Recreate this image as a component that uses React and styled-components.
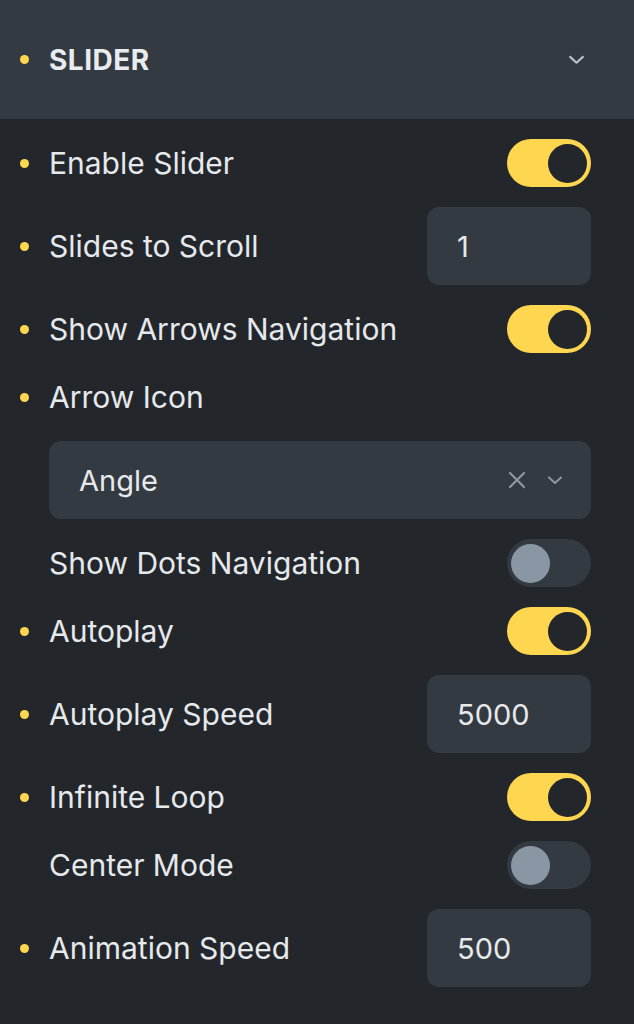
import React from "react";
import styled, { createGlobalStyle } from "styled-components";

const Global = createGlobalStyle`
  html, body { margin: 0; padding: 0; background: #23272c; }
  body { font-family: Inter, "Noto Sans", sans-serif; -webkit-font-smoothing: antialiased; }
`;

const Panel = styled.div`
  width: 634px;
  min-height: 1024px;
  background: #23272c;
  color: #e6e9ec;
`;

const Header = styled.div`
  height: 119px;
  background: #343a42;
  display: flex;
  align-items: center;
  padding: 0 49px 0 20px;
  box-sizing: border-box;
`;

const Title = styled.div`
  flex: 1;
  font-size: 28px;
  font-weight: 700;
  letter-spacing: 0.5px;
  color: #e9ecef;
`;

const Body = styled.div`
  display: flex;
  flex-direction: column;
  gap: 20px;
  padding: 20px 43px 20px 20px;
`;

const Row = styled.div`
  display: flex;
  align-items: center;
  min-height: 48px;
  padding-left: ${(p) => (p.$indent ? "29px" : "0")};
`;

const Dot = styled.span`
  width: 9px;
  height: 9px;
  border-radius: 50%;
  background: ${(p) => (p.$on ? "#ffd64f" : "transparent")};
  margin-right: 20px;
  flex-shrink: 0;
`;

const Label = styled.div`
  flex: 1;
  font-size: 30px;
  color: #e6e9ec;
`;

const Toggle = styled.div`
  width: 84px;
  height: 48px;
  border-radius: 24px;
  box-sizing: border-box;
  padding: 4px;
  display: flex;
  justify-content: ${(p) => (p.$on ? "flex-end" : "flex-start")};
  align-items: center;
  background: ${(p) => (p.$on ? "#ffd64f" : "#343a42")};
`;

const Knob = styled.div`
  width: 39px;
  height: 39px;
  border-radius: 50%;
  background: ${(p) => (p.$on ? "#23272c" : "#8a96a3")};
`;

const NumberBox = styled.div`
  width: 164px;
  height: 78px;
  border-radius: 12px;
  background: #343a42;
  box-sizing: border-box;
  padding-left: 30px;
  display: flex;
  align-items: center;
  font-size: 29px;
  color: #e6e9ec;
`;

const Select = styled.div`
  flex: 1;
  height: 78px;
  border-radius: 12px;
  background: #343a42;
  box-sizing: border-box;
  padding: 0 28px 0 30px;
  display: flex;
  align-items: center;
  gap: 21px;
  font-size: 29px;
  color: #e6e9ec;
`;

const SelectValue = styled.span`
  flex: 1;
`;

const Icon = styled.svg`
  display: block;
  flex-shrink: 0;
`;

const Chevron = ({ size = 16, color = "#aab2bb" }) => (
  <Icon width={size} height={size} viewBox="0 0 16 16">
    <path d="M2 5.5 L8 11 L14 5.5" fill="none" stroke={color} strokeWidth="2" strokeLinecap="round" strokeLinejoin="round" />
  </Icon>
);

const Cross = () => (
  <Icon width="18" height="18" viewBox="0 0 18 18">
    <path d="M2 2 L16 16 M16 2 L2 16" fill="none" stroke="#8f98a2" strokeWidth="2.2" strokeLinecap="round" />
  </Icon>
);

const Switch = ({ on }) => (
  <Toggle $on={on}>
    <Knob $on={on} />
  </Toggle>
);

const rows = [
  { label: "Enable Slider", dot: true, type: "toggle", on: true },
  { label: "Slides to Scroll", dot: true, type: "number", value: "1" },
  { label: "Show Arrows Navigation", dot: true, type: "toggle", on: true },
  { label: "Arrow Icon", dot: true, type: "label" },
  { type: "select", value: "Angle" },
  { label: "Show Dots Navigation", dot: false, type: "toggle", on: false },
  { label: "Autoplay", dot: true, type: "toggle", on: true },
  { label: "Autoplay Speed", dot: true, type: "number", value: "5000" },
  { label: "Infinite Loop", dot: true, type: "toggle", on: true },
  { label: "Center Mode", dot: false, type: "toggle", on: false },
  { label: "Animation Speed", dot: true, type: "number", value: "500" },
];

export default function App() {
  return (
    <Panel>
      <Global />
      <Header>
        <Dot $on />
        <Title>SLIDER</Title>
        <Chevron size={17} color="#b9c0c7" />
      </Header>
      <Body>
        {rows.map((r, i) =>
          r.type === "select" ? (
            <Row key={i} $indent>
              <Select>
                <SelectValue>{r.value}</SelectValue>
                <Cross />
                <Chevron size={16} color="#8f98a2" />
              </Select>
            </Row>
          ) : (
            <Row key={i}>
              <Dot $on={r.dot} />
              <Label>{r.label}</Label>
              {r.type === "toggle" && <Switch on={r.on} />}
              {r.type === "number" && <NumberBox>{r.value}</NumberBox>}
            </Row>
          )
        )}
      </Body>
    </Panel>
  );
}
